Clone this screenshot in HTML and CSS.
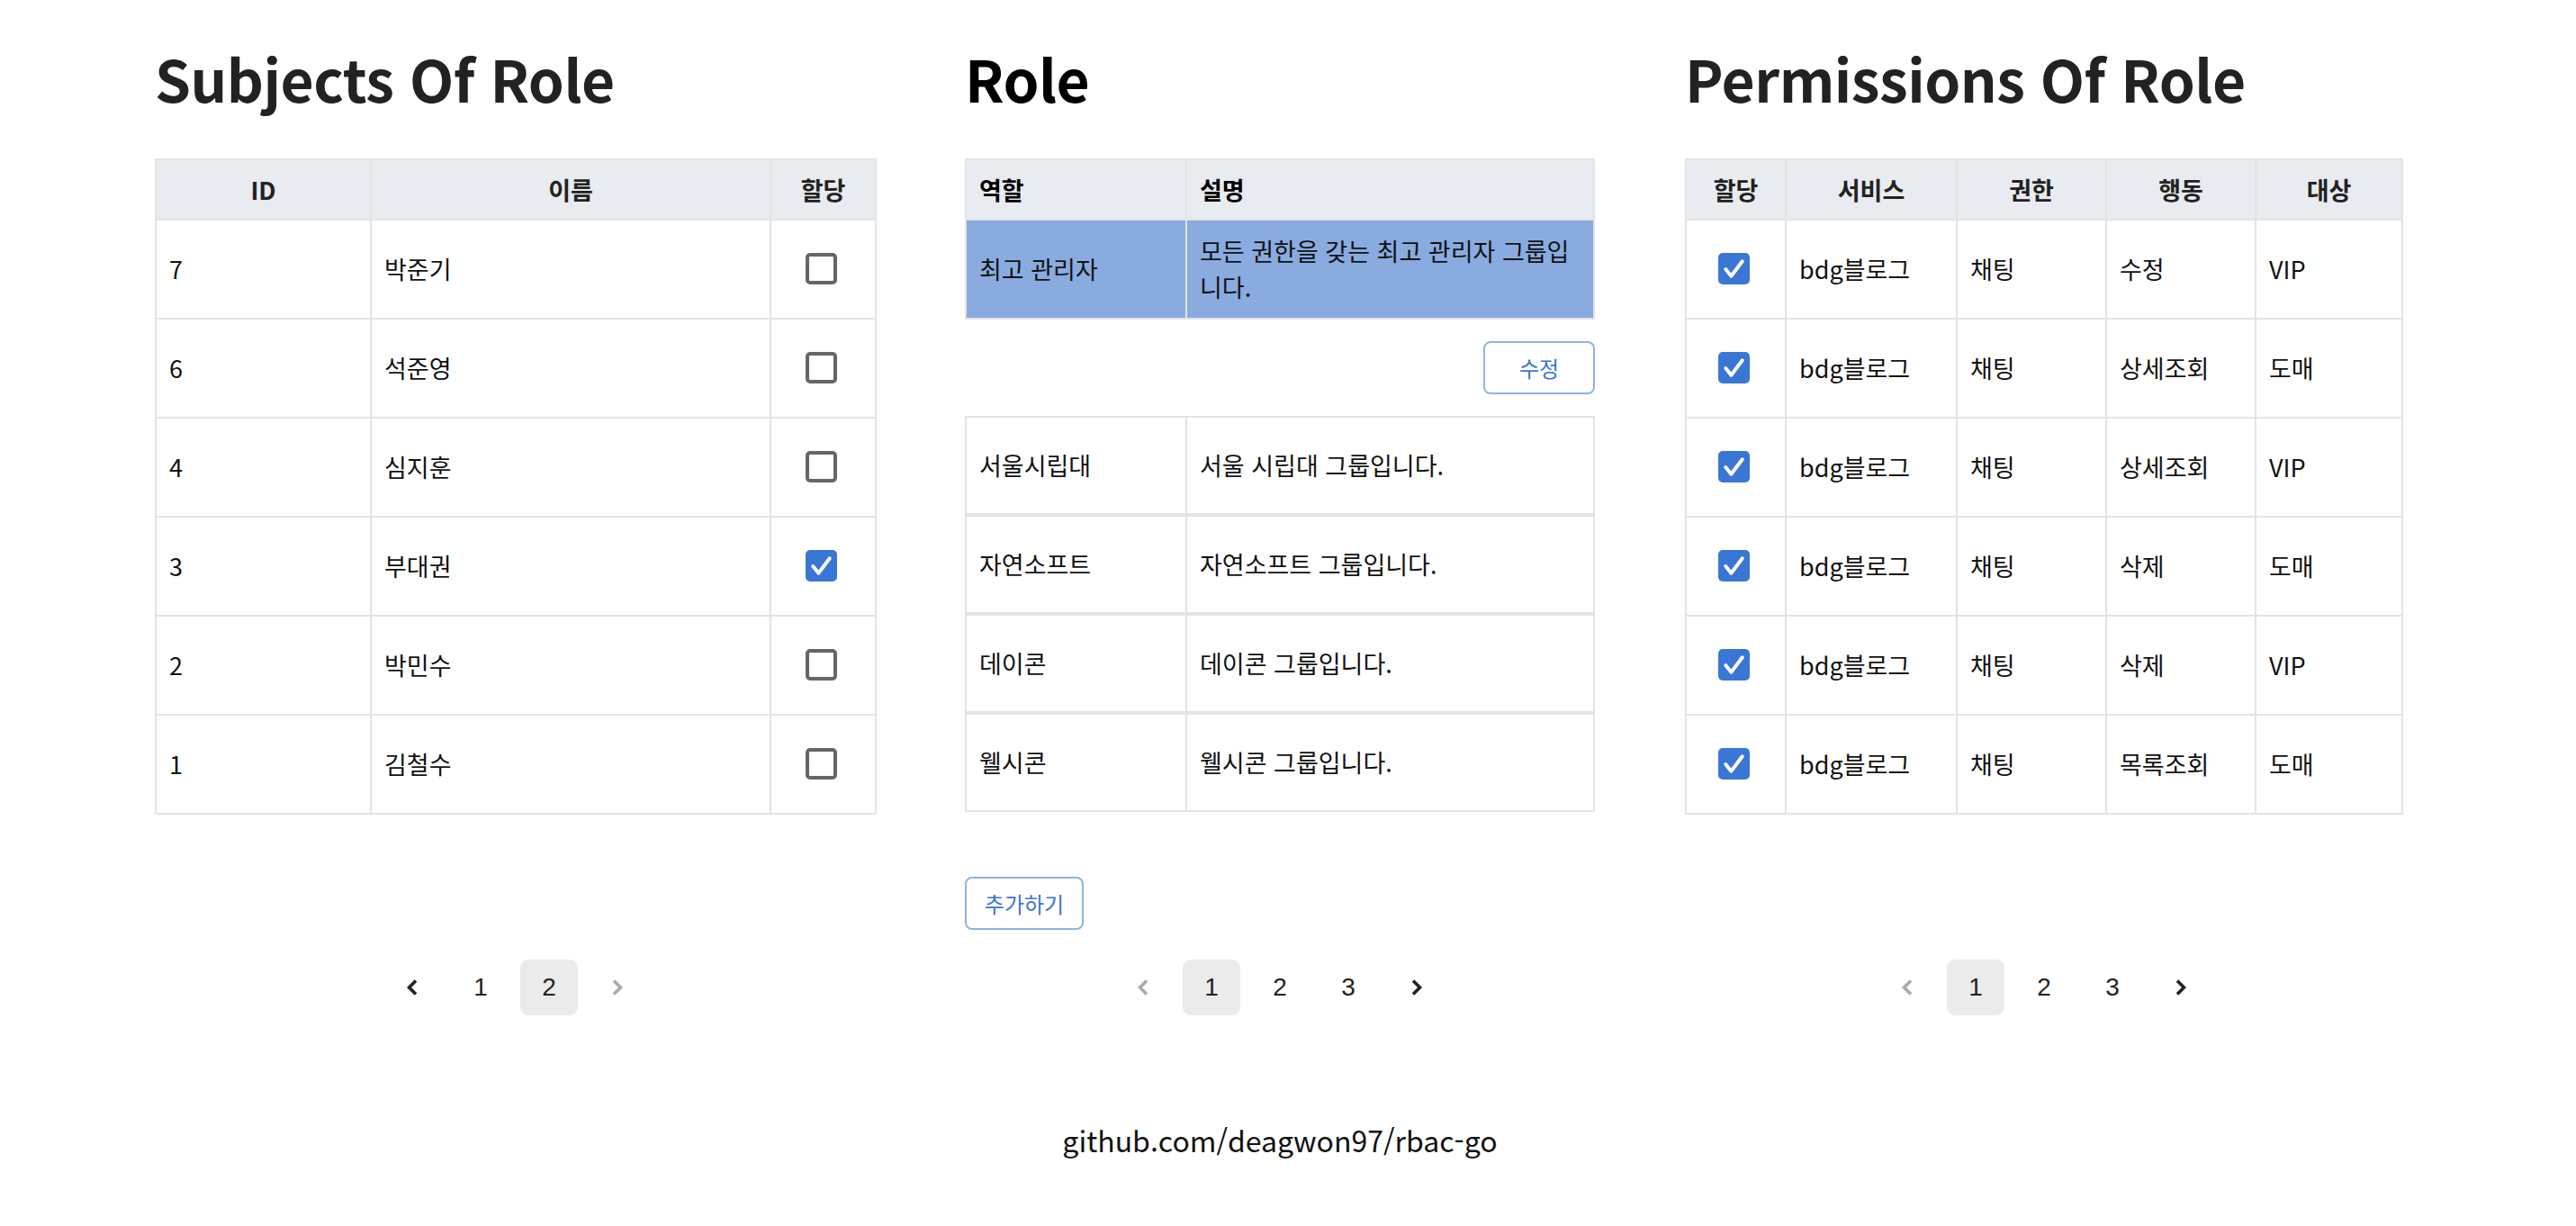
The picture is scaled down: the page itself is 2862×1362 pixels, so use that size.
FILE: index.html
```html
<!DOCTYPE html>
<html lang="ko">

<head>
    <meta charset="UTF-8">
    <meta name="viewport" content="width=device-width, initial-scale=1.0">
    <title>rbac-go</title>
    <link rel="stylesheet" href="styles.css">
</head>

<body>
    <div class="page">
        <div class="columns">
            <!-- subjects -->
            <section class="panel panel-subjects">
                <h1 class="title">Subjects Of Role</h1>
                <table class="grid">
                    <colgroup>
                        <col class="w-id">
                        <col class="w-name">
                        <col class="w-check">
                    </colgroup>
                    <thead>
                        <tr>
                            <th>ID</th>
                            <th>이름</th>
                            <th>할당</th>
                        </tr>
                    </thead>
                    <tbody>
                        <tr>
                            <td>7</td>
                            <td>박준기</td>
                            <td class="mid"><span class="check"></span></td>
                        </tr>
                        <tr>
                            <td>6</td>
                            <td>석준영</td>
                            <td class="mid"><span class="check"></span></td>
                        </tr>
                        <tr>
                            <td>4</td>
                            <td>심지훈</td>
                            <td class="mid"><span class="check"></span></td>
                        </tr>
                        <tr>
                            <td>3</td>
                            <td>부대권</td>
                            <td class="mid"><span class="check on"><svg viewBox="0 0 34 34"><polyline points="8,17.5 14,25 26,9" /></svg></span></td>
                        </tr>
                        <tr>
                            <td>2</td>
                            <td>박민수</td>
                            <td class="mid"><span class="check"></span></td>
                        </tr>
                        <tr>
                            <td>1</td>
                            <td>김철수</td>
                            <td class="mid"><span class="check"></span></td>
                        </tr>
                    </tbody>
                </table>
                <div class="pager">
                    <span class="pager-item"><svg class="chev" viewBox="0 0 12 18"><polyline points="10,1.5 2.5,9 10,16.5" /></svg></span>
                    <span class="pager-item">1</span>
                    <span class="pager-item on">2</span>
                    <span class="pager-item off"><svg class="chev" viewBox="0 0 12 18"><polyline points="2,1.5 9.5,9 2,16.5" /></svg></span>
                </div>
            </section>

            <!-- role -->
            <section class="panel panel-role">
                <h1 class="title title-dark">Role</h1>
                <table class="grid grid-left">
                    <colgroup>
                        <col class="w-role">
                        <col>
                    </colgroup>
                    <thead>
                        <tr>
                            <th>역할</th>
                            <th>설명</th>
                        </tr>
                    </thead>
                    <tbody>
                        <tr class="selected">
                            <td>최고 관리자</td>
                            <td>모든 권한을 갖는 최고 관리자 그룹입니다.</td>
                        </tr>
                    </tbody>
                </table>
                <div class="actions">
                    <button class="btn btn-edit">수정</button>
                </div>
                <div class="role-list">
                    <table class="grid grid-left row-table">
                        <colgroup><col class="w-role"><col></colgroup>
                        <tr>
                            <td>서울시립대</td>
                            <td>서울 시립대 그룹입니다.</td>
                        </tr>
                    </table>
                    <table class="grid grid-left row-table">
                        <colgroup><col class="w-role"><col></colgroup>
                        <tr>
                            <td>자연소프트</td>
                            <td>자연소프트 그룹입니다.</td>
                        </tr>
                    </table>
                    <table class="grid grid-left row-table">
                        <colgroup><col class="w-role"><col></colgroup>
                        <tr>
                            <td>데이콘</td>
                            <td>데이콘 그룹입니다.</td>
                        </tr>
                    </table>
                    <table class="grid grid-left row-table">
                        <colgroup><col class="w-role"><col></colgroup>
                        <tr>
                            <td>웰시콘</td>
                            <td>웰시콘 그룹입니다.</td>
                        </tr>
                    </table>
                </div>
                <div class="add-wrap">
                    <button class="btn btn-add">추가하기</button>
                </div>
                <div class="pager">
                    <span class="pager-item off"><svg class="chev" viewBox="0 0 12 18"><polyline points="10,1.5 2.5,9 10,16.5" /></svg></span>
                    <span class="pager-item on">1</span>
                    <span class="pager-item">2</span>
                    <span class="pager-item">3</span>
                    <span class="pager-item"><svg class="chev" viewBox="0 0 12 18"><polyline points="2,1.5 9.5,9 2,16.5" /></svg></span>
                </div>
            </section>

            <!-- permissions -->
            <section class="panel panel-perms">
                <h1 class="title">Permissions Of Role</h1>
                <table class="grid">
                    <colgroup>
                        <col class="w-p1">
                        <col class="w-p2">
                        <col class="w-p3">
                        <col class="w-p4">
                        <col>
                    </colgroup>
                    <thead>
                        <tr>
                            <th>할당</th>
                            <th>서비스</th>
                            <th>권한</th>
                            <th>행동</th>
                            <th>대상</th>
                        </tr>
                    </thead>
                    <tbody>
                        <tr>
                            <td class="mid"><span class="check on"><svg viewBox="0 0 34 34"><polyline points="8,17.5 14,25 26,9" /></svg></span></td>
                            <td>bdg블로그</td>
                            <td>채팅</td>
                            <td>수정</td>
                            <td>VIP</td>
                        </tr>
                        <tr>
                            <td class="mid"><span class="check on"><svg viewBox="0 0 34 34"><polyline points="8,17.5 14,25 26,9" /></svg></span></td>
                            <td>bdg블로그</td>
                            <td>채팅</td>
                            <td>상세조회</td>
                            <td>도매</td>
                        </tr>
                        <tr>
                            <td class="mid"><span class="check on"><svg viewBox="0 0 34 34"><polyline points="8,17.5 14,25 26,9" /></svg></span></td>
                            <td>bdg블로그</td>
                            <td>채팅</td>
                            <td>상세조회</td>
                            <td>VIP</td>
                        </tr>
                        <tr>
                            <td class="mid"><span class="check on"><svg viewBox="0 0 34 34"><polyline points="8,17.5 14,25 26,9" /></svg></span></td>
                            <td>bdg블로그</td>
                            <td>채팅</td>
                            <td>삭제</td>
                            <td>도매</td>
                        </tr>
                        <tr>
                            <td class="mid"><span class="check on"><svg viewBox="0 0 34 34"><polyline points="8,17.5 14,25 26,9" /></svg></span></td>
                            <td>bdg블로그</td>
                            <td>채팅</td>
                            <td>삭제</td>
                            <td>VIP</td>
                        </tr>
                        <tr>
                            <td class="mid"><span class="check on"><svg viewBox="0 0 34 34"><polyline points="8,17.5 14,25 26,9" /></svg></span></td>
                            <td>bdg블로그</td>
                            <td>채팅</td>
                            <td>목록조회</td>
                            <td>도매</td>
                        </tr>
                    </tbody>
                </table>
                <div class="pager">
                    <span class="pager-item off"><svg class="chev" viewBox="0 0 12 18"><polyline points="10,1.5 2.5,9 10,16.5" /></svg></span>
                    <span class="pager-item on">1</span>
                    <span class="pager-item">2</span>
                    <span class="pager-item">3</span>
                    <span class="pager-item"><svg class="chev" viewBox="0 0 12 18"><polyline points="2,1.5 9.5,9 2,16.5" /></svg></span>
                </div>
            </section>
        </div>
        <p class="footer">github.com/deagwon97/rbac-go</p>
    </div>
</body>

</html>
```

FILE: styles.css
```css
* {
    margin: 0;
    padding: 0;
    box-sizing: border-box;
}

body {
    background: #fff;
    color: #222;
    font-family: "Noto Sans CJK KR", "Noto Sans", sans-serif;
}

.page {
    width: 2500px;
    margin-left: 172px;
    padding-top: 46px;
}

.columns {
    display: flex;
    gap: 100px;
    align-items: stretch;
}

.panel {
    display: flex;
    flex-direction: column;
}

.panel-subjects {
    width: 800px;
}

.panel-role {
    width: 700px;
}

.panel-perms {
    width: 798px;
}

.title {
    font-size: 64px;
    font-weight: 700;
    line-height: 80px;
    color: #222;
    margin-bottom: 50px;
    letter-spacing: -0.5px;
}

.title-dark {
    color: #000;
}

/* tables */
.grid {
    width: 100%;
    border-collapse: collapse;
    table-layout: fixed;
    font-size: 27px;
    line-height: 40px;
    color: #111;
}

.grid th,
.grid td {
    border: 2px solid #e2e3e7;
    padding: 0 14px;
    vertical-align: middle;
}

.grid th {
    height: 67px;
    background-color: #e8ebef;
    font-weight: 700;
    text-align: center;
    color: #222;
}

.grid td {
    height: 110px;
    text-align: left;
}

.grid-left th {
    text-align: left;
    color: #000;
}

.grid td.mid {
    text-align: center;
    padding: 0;
}

.w-id {
    width: 239px;
}

.w-name {
    width: 444px;
}

.w-check {
    width: 117px;
}

.w-role {
    width: 245px;
}

.w-p1 {
    width: 111px;
}

.w-p2 {
    width: 190px;
}

.w-p3 {
    width: 166px;
}

.w-p4 {
    width: 166px;
}

.selected td {
    background-color: #89abe0;
    color: #111;
    border-color: #e2e3e7;
}

.row-table td {
    height: 108px;
    color: #111;
}

/* checkbox */
.check {
    display: inline-block;
    width: 35px;
    height: 35px;
    border: 4px solid #666;
    border-radius: 5px;
    vertical-align: middle;
    position: relative;
    top: -4px;
    left: -2px;
}

.check.on {
    border: none;
    background-color: #3a76d4;
}

.check svg {
    display: block;
    width: 35px;
    height: 35px;
    fill: none;
    stroke: #fff;
    stroke-width: 3.8;
    stroke-linecap: round;
    stroke-linejoin: round;
}

/* buttons */
.actions {
    display: flex;
    justify-content: flex-end;
    margin-top: 24px;
    margin-bottom: 24px;
}

.btn {
    height: 59px;
    background: #fff;
    border: 2px solid #8fb2e8;
    border-radius: 8px;
    color: #3a74d2;
    font-family: "Noto Sans CJK KR", sans-serif;
    font-size: 24px;
    cursor: pointer;
}

.btn-edit {
    width: 124px;
}

.btn-add {
    width: 132px;
}

.add-wrap {
    margin-top: 72px;
    margin-bottom: 33px;
}

/* pagination */
.pager {
    margin-top: auto;
    display: flex;
    justify-content: center;
    gap: 12px;
    font-family: "Liberation Sans", Arial, sans-serif;
    font-size: 28px;
    color: #222;
}

.pager-item {
    width: 64px;
    height: 62px;
    border-radius: 9px;
    display: flex;
    align-items: center;
    justify-content: center;
    cursor: pointer;
}

.pager-item.on {
    background-color: #ebebeb;
}

.pager-item.off {
    color: #aaa;
}

.chev {
    width: 12px;
    height: 18px;
    fill: none;
    stroke: currentColor;
    stroke-width: 3.6;
}

.footer {
    margin-top: 114px;
    text-align: center;
    font-size: 32px;
    line-height: 48px;
    color: #111;
}
```
